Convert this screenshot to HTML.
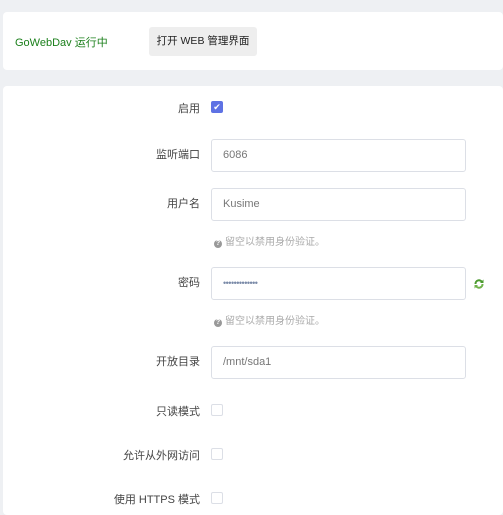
<!DOCTYPE html>
<html><head><meta charset="utf-8"><style>
body{margin:0;width:503px;height:515px;background:#eef0f3;font-family:"Liberation Sans","Noto Sans CJK SC",sans-serif;font-size:11px;color:#333;overflow:hidden;position:relative}
.card{position:absolute;left:3px;right:0;background:#fff;border-radius:4px}
.a{position:absolute}
.lbl{position:absolute;right:303px;text-align:right;color:#444;font-size:11px}
.inp{position:absolute;left:211px;width:255px;height:33px;border:1px solid #dcdfe6;border-radius:3px;box-sizing:border-box;color:#777;font-size:11px;padding-left:11px;line-height:31px}
.cb{position:absolute;left:211px;width:12px;height:12px;border:1px solid #dcdfe6;border-radius:2px;box-sizing:border-box}
.hint{position:absolute;left:214px;color:#aaa;font-size:10px}
.q{display:inline-block;width:8px;height:8px;border-radius:50%;background:#999;color:#fff;font-size:7px;line-height:8px;text-align:center;vertical-align:0;margin-right:3px;font-weight:bold}
</style></head><body>
<div class="card" style="top:12px;height:58px"></div>
<div class="a" style="left:15px;top:34px;color:#1a7f1a;font-size:11px">GoWebDav 运行中</div>
<div class="a" style="left:149px;top:27px;width:108px;height:29px;background:#eeeeee;border-radius:3px;text-align:center;line-height:29px;font-size:10.5px;color:#222">打开 WEB 管理界面</div>
<div class="card" style="top:86px;bottom:0"></div>
<div class="lbl" style="top:100px">启用</div>
<div class="a" style="left:211px;top:101px;width:12px;height:12px;background:#5e72e4;border-radius:2px;color:#fff;font-size:9px;line-height:12px;text-align:center">✔</div>
<div class="lbl" style="top:146px">监听端口</div>
<div class="inp" style="top:139px">6086</div>
<div class="lbl" style="top:195px">用户名</div>
<div class="inp" style="top:188px">Kusime</div>
<div class="hint" style="top:233px"><span class="q">?</span>留空以禁用身份验证。</div>
<div class="lbl" style="top:274px">密码</div>
<div class="inp" style="top:267px;color:#7a8aa8;font-size:9px;letter-spacing:-0.5px">•••••••••••••</div>
<svg class="a" style="left:474px;top:279px" width="10" height="10" viewBox="0 0 10 10"><path d="M1.5 5A3.5 3.5 0 0 1 8 3" stroke="#4b9a2f" stroke-width="2" fill="none"/><path d="M8.5 5A3.5 3.5 0 0 1 2 7" stroke="#6fb24a" stroke-width="2" fill="none"/><path d="M9.5 0.5V4H6z" fill="#4b9a2f"/><path d="M0.5 9.5V6H4z" fill="#6fb24a"/></svg>
<div class="hint" style="top:312px"><span class="q">?</span>留空以禁用身份验证。</div>
<div class="lbl" style="top:353px">开放目录</div>
<div class="inp" style="top:346px">/mnt/sda1</div>
<div class="lbl" style="top:403px">只读模式</div>
<div class="cb" style="top:404px"></div>
<div class="lbl" style="top:447px">允许从外网访问</div>
<div class="cb" style="top:448px"></div>
<div class="lbl" style="top:491px">使用 HTTPS 模式</div>
<div class="cb" style="top:492px"></div>
</body></html>
